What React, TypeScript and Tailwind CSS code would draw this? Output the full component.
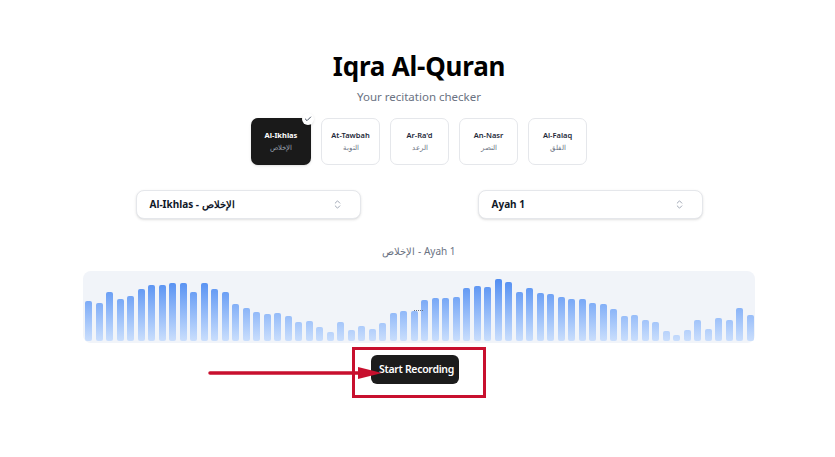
import { Check, ChevronsUpDown } from 'lucide-react';

const surahs = [
  { name: 'Al-Ikhlas', arabic: 'الإخلاص' },
  { name: 'At-Tawbah', arabic: 'التوبة' },
  { name: "Ar-Ra'd", arabic: 'الرعد' },
  { name: 'An-Nasr', arabic: 'النصر' },
  { name: 'Al-Falaq', arabic: 'الفلق' },
];

const bars = [
  40, 38, 49, 42, 45, 52, 56, 56, 58, 58, 49, 58, 52, 49, 37, 33, 29, 27, 28, 25, 19, 20, 14, 9, 19, 11, 15, 12, 18, 28, 30,
  30, 41, 43, 43, 44, 53, 55, 54, 62, 59, 49, 53, 48, 47, 44, 42, 42, 38, 37, 32, 25, 26, 21, 19, 10, 6, 11, 21, 12, 23, 21,
  33, 26,
];

function SelectBox({ label }: { label: string }) {
  return (
    <div className="w-[225px] h-[29px] flex items-center justify-between pl-[13px] pr-[17px] bg-white border border-gray-200 rounded-lg shadow-sm">
      <span className="text-[10px] font-bold text-gray-900">{label}</span>
      <ChevronsUpDown className="w-[11px] h-[11px] text-gray-400" strokeWidth={2} />
    </div>
  );
}

export default function App() {
  return (
    <div className="relative w-full h-[457px] bg-white overflow-hidden font-['Noto_Sans',sans-serif]">
      <div className="flex flex-col items-center pt-[50px] pl-[3px]">
        <h1 className="text-[26px] leading-[32px] font-bold text-black tracking-[-0.2px]">Iqra Al-Quran</h1>
        <p className="mt-[6px] text-[11.5px] leading-[18px] text-gray-500">Your recitation checker</p>

        {/* Surah cards */}
        <div className="mt-[12px] flex gap-[10px]">
          {surahs.map((s, i) => (
            <div
              key={s.name}
              className={
                i === 0
                  ? 'relative w-[60px] h-[47px] rounded-[7px] bg-[#1a1a1a] flex flex-col items-center justify-center shadow-sm'
                  : 'relative w-[59px] h-[47px] rounded-[7px] bg-white border border-gray-200 flex flex-col items-center justify-center'
              }
            >
              <span className={i === 0 ? 'text-[7.5px] leading-[11px] font-bold text-white' : 'text-[7.5px] leading-[11px] font-semibold text-gray-800'}>
                {s.name}
              </span>
              <span className={i === 0 ? 'mt-[2px] text-[6.5px] leading-[10px] text-gray-400' : 'mt-[2px] text-[6.5px] leading-[10px] text-gray-500'}>
                {s.arabic}
              </span>
              {i === 0 && (
                <span className="absolute -top-[5px] -right-[3px] w-[12px] h-[12px] rounded-full bg-white flex items-center justify-center shadow-sm">
                  <Check className="w-[8px] h-[8px] text-gray-600" strokeWidth={3} />
                </span>
              )}
            </div>
          ))}
        </div>

        {/* Selectors */}
        <div className="mt-[25px] w-[567px] flex justify-between">
          <SelectBox label="Al-Ikhlas - الإخلاص" />
          <SelectBox label="Ayah 1" />
        </div>

        <p className="mt-[25px] text-[10px] leading-[14px] text-gray-500">الإخلاص - Ayah 1</p>

        {/* Waveform */}
        <div className="relative mt-[13px] w-[672px] h-[72px] rounded-[8px] bg-[#f1f4f9] flex items-end gap-[3.5px] px-[2px] pb-[2px]">
          {bars.map((h, i) => (
            <div
              key={i}
              className="flex-1 rounded-[2px] bg-gradient-to-t from-[#cadefc] to-[#4a88f0] bg-[length:100%_66px] bg-bottom"
              style={{ height: h }}
            />
          ))}
          <span className="absolute left-[331px] top-[39px] w-[9px] border-t border-dotted border-gray-500" />
        </div>

        <button className="mt-[12px] mr-[8px] w-[88px] h-[29px] pl-[3px] rounded-[6px] bg-[#1c1c1c] text-white text-[10.5px] font-semibold tracking-[-0.3px]">
          Start Recording
        </button>
      </div>

      {/* annotation overlay */}
      <svg className="absolute left-0 top-0 pointer-events-none" width="835" height="457" viewBox="0 0 835 457">
        <rect x="353.5" y="348.5" width="131" height="48" fill="none" stroke="#c8102e" strokeWidth="3" />
        <line x1="210" y1="373" x2="362" y2="373" stroke="#c8102e" strokeWidth="3.5" strokeLinecap="round" />
        <polygon points="358,367 382,373 358,379" fill="#c8102e" />
      </svg>
    </div>
  );
}
